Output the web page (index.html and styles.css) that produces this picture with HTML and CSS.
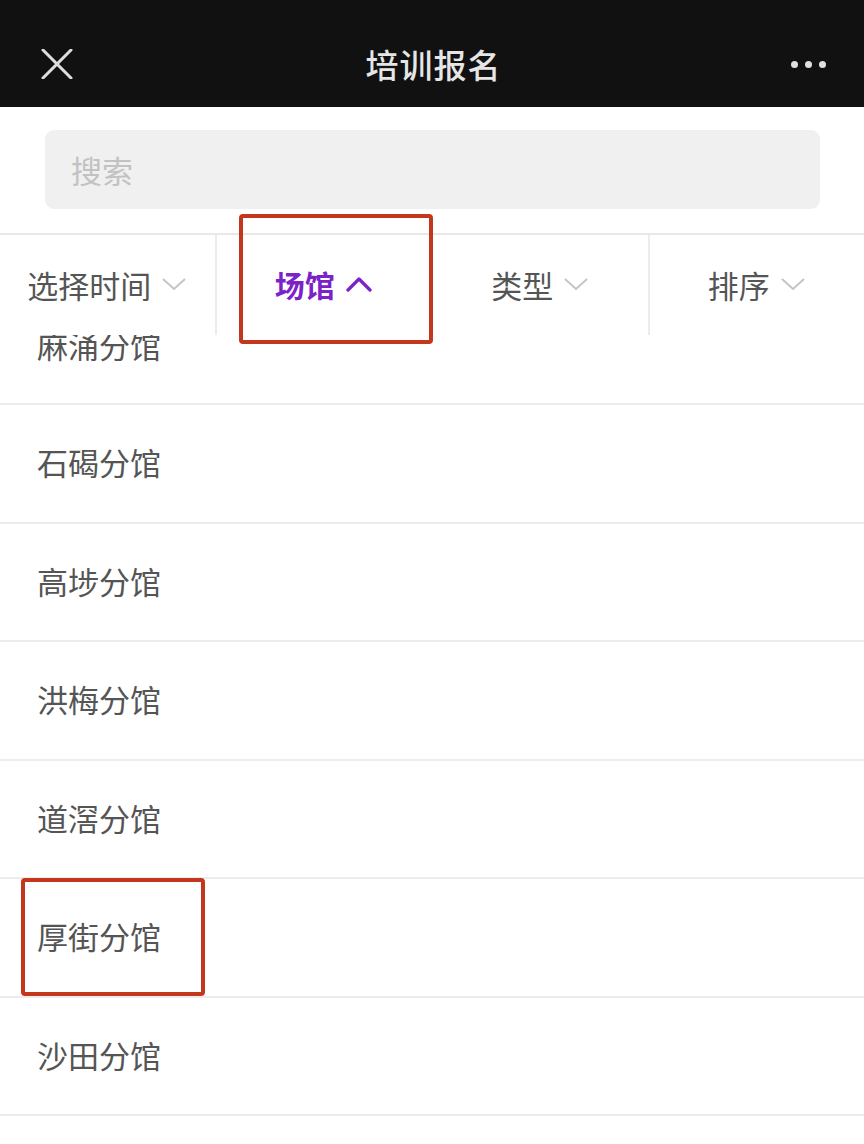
FILE: index.html
```html
<!DOCTYPE html>
<html lang="zh-CN">
<head>
    <meta charset="UTF-8">
    <meta name="viewport" content="width=device-width, initial-scale=1.0">
    <title>培训报名</title>
    <link rel="stylesheet" href="styles.css">
</head>
<body>

    <header class="topbar">
        <div class="topbar-left">
            <svg class="close-icon" width="32" height="30" viewBox="0 0 32 30">
                <path d="M2 1 L30 29 M30 1 L2 29" stroke="#dedede" stroke-width="3" fill="none" stroke-linecap="round"/>
            </svg>
        </div>
        <h1 class="topbar-title">培训报名</h1>
        <div class="topbar-right">
            <span class="dot"></span><span class="dot"></span><span class="dot"></span>
        </div>
    </header>

    <div class="search-wrap">
        <div class="search-box">搜索</div>
    </div>

    <!-- Filter tabs -->
    <div class="filter-bar">
        <div class="filter-item">
            <span>选择时间</span>
            <svg class="chev" width="26" height="14" viewBox="0 0 26 14"><path d="M2 2 L13 12 L24 2" stroke="#c4c4c4" stroke-width="2" fill="none"/></svg>
        </div>
        <div class="filter-item active">
            <span>场馆</span>
            <svg class="chev" width="28" height="16" viewBox="0 0 28 16"><path d="M3 14 L14 3 L25 14" stroke="#7b22c8" stroke-width="3.2" fill="none" stroke-linecap="round" stroke-linejoin="round"/></svg>
        </div>
        <div class="filter-item">
            <span>类型</span>
            <svg class="chev" width="26" height="14" viewBox="0 0 26 14"><path d="M2 2 L13 12 L24 2" stroke="#c4c4c4" stroke-width="2" fill="none"/></svg>
        </div>
        <div class="filter-item">
            <span>排序</span>
            <svg class="chev" width="26" height="14" viewBox="0 0 26 14"><path d="M2 2 L13 12 L24 2" stroke="#c4c4c4" stroke-width="2" fill="none"/></svg>
        </div>
        <div class="mark mark-tab"></div>
    </div>

    <!-- Venue list (scrolled a little) -->
    <div class="venue-list">
        <ul class="venues">
            <li>麻涌分馆</li>
            <li>石碣分馆</li>
            <li>高埗分馆</li>
            <li>洪梅分馆</li>
            <li>道滘分馆</li>
            <li>厚街分馆<div class="mark mark-row"></div></li>
            <li>沙田分馆</li>
        </ul>
    </div>

</body>
</html>
```

FILE: styles.css
```css
/* Basic styling */
body {
    font-family: "Noto Sans CJK SC", "Noto Sans", sans-serif;
    margin: 0;
    padding: 0;
    background-color: #fff;
    height: 1144px;
    overflow: hidden;
}
.topbar {
    background-color: #111;
    height: 107px;
    box-sizing: border-box;
    padding: 21px 38px 0 41px;
    display: grid;
    grid-template-columns: 1fr auto 1fr;
    align-items: center;
}
.topbar-left {
    display: flex;
    align-items: center;
}
.close-icon {
    display: block;
}
.topbar-title {
    margin: 0;
    color: #e6e6e6;
    font-size: 33px;
    font-weight: 500;
    letter-spacing: 1px;
}
.topbar-right {
    display: flex;
    justify-content: flex-end;
    gap: 7px;
}
.dot {
    width: 7px;
    height: 7px;
    border-radius: 50%;
    background-color: #e0e0e0;
}
.search-wrap {
    padding: 23px 44px 24px 45px;
}
.search-box {
    height: 79px;
    background-color: #f0f0f0;
    border-radius: 9px;
    color: #c2c2c2;
    font-size: 31px;
    line-height: 79px;
    padding-left: 26px;
}
.filter-bar {
    position: relative;
    z-index: 2;
    display: flex;
    height: 102px;
    box-sizing: border-box;
    border-top: 2px solid #e8e8e8;
    background-color: #fff;
}
.filter-item {
    flex: 1;
    display: flex;
    align-items: center;
    justify-content: center;
    gap: 10px;
    font-size: 31px;
    color: #555;
    padding-bottom: 2px;
}
.filter-item + .filter-item {
    border-left: 2px solid #ececec;
}
.filter-item.active {
    color: #7b22c8;
    font-weight: 700;
    font-size: 30px;
}
.chev {
    display: block;
}
.mark {
    position: absolute;
    border: 4px solid #c3381c;
    border-radius: 4px;
    box-sizing: border-box;
}
.mark-tab {
    left: 239px;
    top: -21px;
    width: 194px;
    height: 130px;
}
.venue-list {
    overflow: hidden;
    height: 808px;
}
.venues {
    list-style: none;
    margin: -47px 0 0 0;
    padding: 0;
}
.venues li {
    position: relative;
    height: 118.5px;
    box-sizing: border-box;
    border-bottom: 2px solid #ececec;
    display: flex;
    align-items: center;
    padding-left: 37px;
    padding-bottom: 3px;
    font-size: 31px;
    color: #555;
}
.venues li:first-child {
    height: 117px;
}
.mark-row {
    left: 21px;
    top: -1px;
    width: 184px;
    height: 118px;
}
```
